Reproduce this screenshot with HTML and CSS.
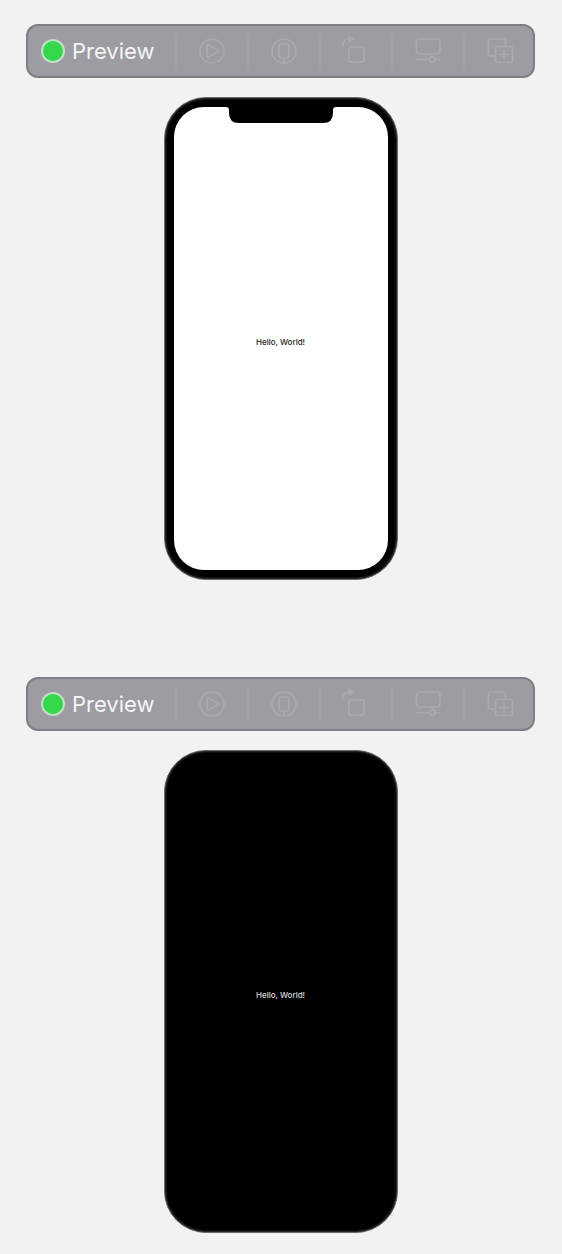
FILE: index.html
```html
<!DOCTYPE html>
<html lang="en">
<head>
<meta charset="utf-8">
<meta name="viewport" content="width=device-width, initial-scale=1">
<title>Preview</title>
<link rel="stylesheet" href="styles.css">
</head>
<body>
<svg class="symbols" aria-hidden="true">
  <symbol id="play" viewBox="0 0 32 32"><circle cx="16" cy="16" r="12"/><path d="M11 11v10q0 2 1.800 1.100l8.800-5q1.600-1.100 0-2.200l-8.800-5q-1.800-.9-1.800 1.100z"/></symbol>
  <symbol id="device" viewBox="0 0 32 32"><circle cx="16" cy="16" r="12"/><rect x="11" y="9" width="10" height="14" rx="2.500"/><path d="M16 23v5"/></symbol>
  <symbol id="rotate" viewBox="0 0 32 32"><rect x="9" y="12" width="15" height="15" rx="2"/><path d="M3 11v-1q0-6 6-6"/><path class="solid" d="M9 1.500l4.500 2.500-4.500 2.500z"/></symbol>
  <symbol id="settings" viewBox="0 0 32 32"><rect x="4.500" y="4" width="23.500" height="15" rx="3"/><path d="M4 24.500h13.500M23 24.500h5"/><circle cx="20.300" cy="24.500" r="2.700"/></symbol>
  <symbol id="duplicate" viewBox="0 0 32 32"><path d="M11 21H6q-1.500 0-1.500-1.500V5.500Q4.500 4 6 4h14q1.500 0 1.500 1.500V11"/><rect x="11.500" y="11.500" width="17" height="16" rx="2"/><path d="M20 15.500v8M16 19.500h8"/></symbol>
</svg>
<main class="canvas">
  <section class="preview">
    <header class="toolbar">
      <span class="title"><span class="status"></span>Preview</span>
      <button class="tool" type="button" aria-label="Live preview"><svg class="icon"><use href="#play"/></svg></button>
      <button class="tool" type="button" aria-label="Preview on device"><svg class="icon"><use href="#device"/></svg></button>
      <button class="tool" type="button" aria-label="Rotate"><svg class="icon"><use href="#rotate"/></svg></button>
      <button class="tool" type="button" aria-label="Device settings"><svg class="icon"><use href="#settings"/></svg></button>
      <button class="tool" type="button" aria-label="Duplicate preview"><svg class="icon"><use href="#duplicate"/></svg></button>
    </header>
    <div class="phone">
      <div class="screen">
        <svg class="notch" viewBox="0 0 110 16" aria-hidden="true"><path d="M0 0q3 0 3 3v3q0 10 10 10h84q10 0 10-10V3q0-3 3-3z"/></svg>
        <p class="message">Hello, World!</p>
      </div>
    </div>
  </section>
  <section class="preview">
    <header class="toolbar">
      <span class="title"><span class="status"></span>Preview</span>
      <button class="tool" type="button" aria-label="Live preview"><svg class="icon"><use href="#play"/></svg></button>
      <button class="tool" type="button" aria-label="Preview on device"><svg class="icon"><use href="#device"/></svg></button>
      <button class="tool" type="button" aria-label="Rotate"><svg class="icon"><use href="#rotate"/></svg></button>
      <button class="tool" type="button" aria-label="Device settings"><svg class="icon"><use href="#settings"/></svg></button>
      <button class="tool" type="button" aria-label="Duplicate preview"><svg class="icon"><use href="#duplicate"/></svg></button>
    </header>
    <div class="phone">
      <div class="screen dark">
        <p class="message">Hello, World!</p>
      </div>
    </div>
  </section>
</main>
</body>
</html>
```
FILE: styles.css
```css
* {
  box-sizing: border-box;
}

body {
  margin: 0;
  background: #f2f2f2;
  font-family: Inter, "Liberation Sans", sans-serif;
}

.symbols {
  display: none;
}

.canvas {
  display: flex;
  flex-direction: column;
  gap: 97px;
  padding: 24px 27px 22px 26px;
}

.preview {
  display: flex;
  flex-direction: column;
  align-items: center;
  gap: 19px;
}

.toolbar {
  display: flex;
  align-items: center;
  width: 100%;
  height: 54px;
  border: 2px solid #7f7e84;
  border-radius: 12px;
  background: #9c9ca2;
}

.title {
  display: flex;
  flex: 1;
  align-items: center;
  gap: 7px;
  padding-left: 13px;
  color: #f5f5f6;
  font-size: 22px;
  line-height: 28px;
}

.status {
  width: 24px;
  height: 24px;
  border: 2px solid #c3dfc5;
  border-radius: 50%;
  background: #32d74b;
}

.tool {
  display: flex;
  flex: 0 1 72px;
  align-items: center;
  justify-content: center;
  height: 34px;
  padding: 0;
  border: 0;
  border-left: 2px solid #a2a2a6;
  background: none;
}

.tool:last-child {
  margin-right: -2px;
}

.icon {
  width: 32px;
  height: 32px;
  fill: none;
  stroke: #aaaaac;
  stroke-width: 1.7;
  stroke-linecap: round;
  stroke-linejoin: round;
}

.solid {
  fill: #aaaaac;
}

.phone {
  padding: 9px;
  border: 1px solid #6a696a;
  border-radius: 42px;
  background: #000;
  box-shadow: inset 0 0 2px 1px #333132;
}

.screen {
  display: flex;
  position: relative;
  align-items: center;
  justify-content: center;
  width: 214px;
  aspect-ratio: 214 / 463;
  border-radius: 30px;
  background: #fff;
  color: #222;
}

.dark {
  background: #000;
  color: #ddd;
}

.notch {
  position: absolute;
  top: 0;
  left: 52px;
  width: 110px;
  height: 16px;
}

.message {
  margin: 0;
  padding-top: 6px;
  font-size: 8px;
  font-weight: 500;
  line-height: 10px;
}
```
